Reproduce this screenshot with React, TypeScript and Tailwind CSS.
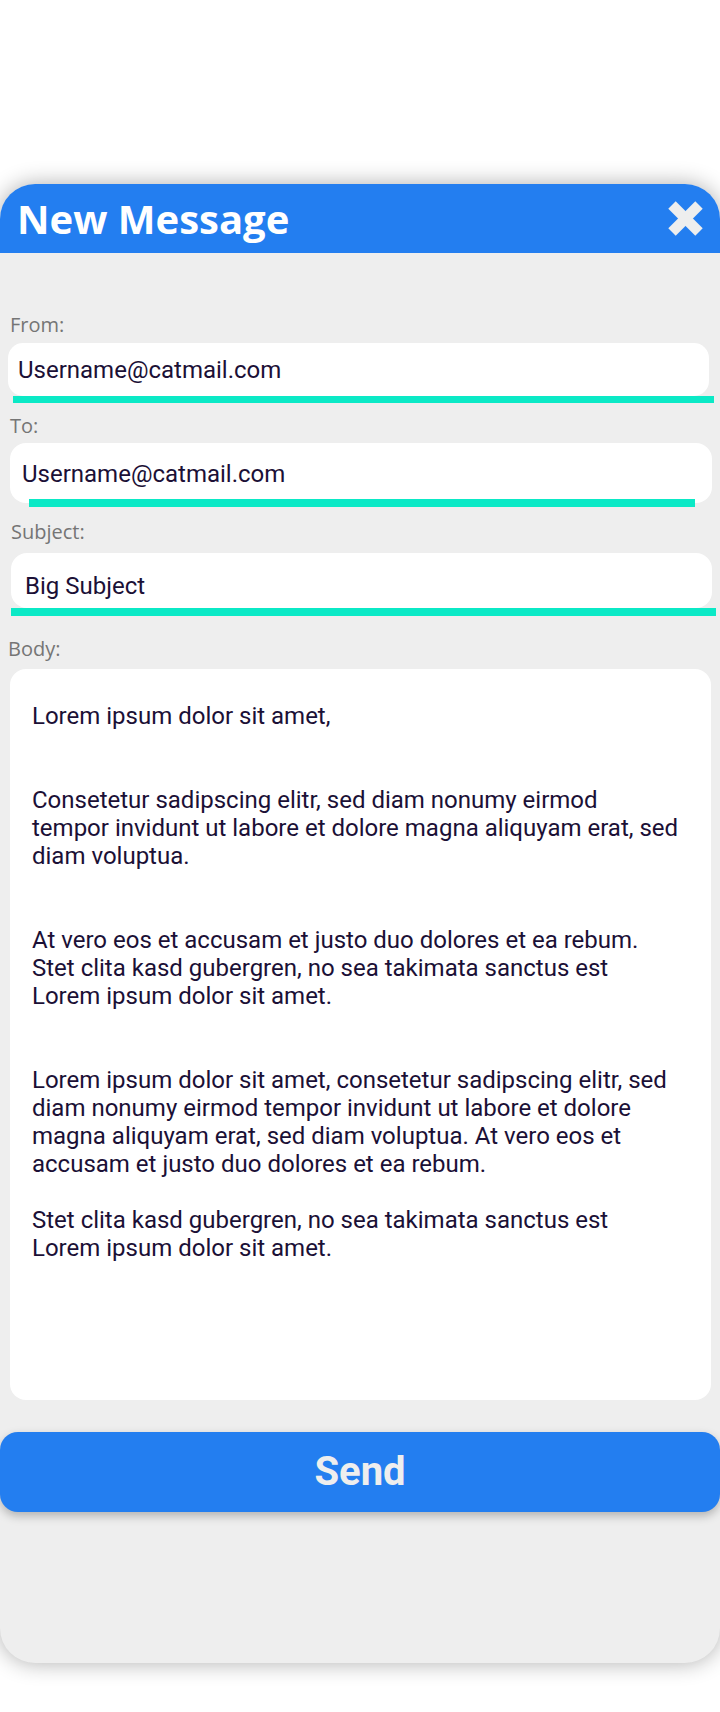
import React from "react";

const roboto = { fontFamily: "Roboto, 'Liberation Sans', sans-serif" };

const Label = ({ text, className }: { text: string; className: string }) => (
  <p className={`text-[20px] leading-[24px] text-[#757575] ${className}`} style={{ fontFamily: "'Open Sans', sans-serif" }}>
    {text}
  </p>
);

const CloseIcon = () => (
  <svg width="37" height="37" viewBox="0 0 37 37" className="shrink-0">
    <line x1="5" y1="5" x2="32" y2="32" stroke="#eeeeee" strokeWidth="10.5" />
    <line x1="32" y1="5" x2="5" y2="32" stroke="#eeeeee" strokeWidth="10.5" />
  </svg>
);

export default function App() {
  return (
    <div className="w-[720px] h-[1712px] bg-white pt-[184px]">
      <div className="w-full bg-[#eeeeee] rounded-[35px] shadow-[0_0_22px_rgba(0,0,0,0.32)] overflow-hidden pb-[151px]">
        <div className="h-[69px] bg-[#237ef0] flex items-center justify-between pl-[17px] pr-[16px]">
          <h1 className="text-[40px] font-bold text-white leading-none" style={{ fontFamily: "'Open Sans', sans-serif" }}>
            New Message
          </h1>
          <CloseIcon />
        </div>

        <div className="pt-[60px] flex flex-col" style={roboto}>
          <Label text="From:" className="pl-[10px]" />
          <div className="mt-[6px] ml-[8px] mr-[11px] h-[53px] bg-white rounded-[15px] flex items-center pl-[10px] text-[24px] text-[#1b1036]">
            Username@catmail.com
          </div>
          <div className="ml-[13px] mr-[6px] h-[7px] bg-[#0be9c6]" />

          <Label text="To:" className="pl-[10px] mt-[11px]" />
          <div className="mt-[5px] ml-[10px] mr-[8px] h-[60px] bg-white rounded-[16px] flex items-center pl-[12px] pt-[2px] text-[24px] text-[#1b1036]">
            Username@catmail.com
          </div>
          <div className="-mt-[4px] ml-[29px] mr-[25px] h-[8px] bg-[#0be9c6]" />

          <Label text="Subject:" className="pl-[11px] mt-[13px]" />
          <div className="mt-[9px] ml-[11px] mr-[8px] h-[55px] bg-white rounded-[16px] flex items-center pl-[14px] pt-[10px] text-[24px] text-[#1b1036]">
            Big Subject
          </div>
          <div className="ml-[11px] mr-[4px] h-[8px] bg-[#0be9c6]" />

          <Label text="Body:" className="pl-[8px] mt-[21px]" />
          <div className="mt-[8px] ml-[10px] mr-[9px] h-[731px] bg-white rounded-[16px] pl-[22px] pr-[12px] pt-[33px] text-[24px] leading-[28px] text-[#1b1036]">
            <p>Lorem ipsum dolor sit amet,</p>
            <p className="mt-[56px]">
              Consetetur sadipscing elitr, sed diam nonumy eirmod
              <br />
              tempor invidunt ut labore et dolore magna aliquyam erat, sed
              <br />
              diam voluptua.
            </p>
            <p className="mt-[56px]">
              At vero eos et accusam et justo duo dolores et ea rebum.
              <br />
              Stet clita kasd gubergren, no sea takimata sanctus est
              <br />
              Lorem ipsum dolor sit amet.
            </p>
            <p className="mt-[56px]">
              Lorem ipsum dolor sit amet, consetetur sadipscing elitr, sed
              <br />
              diam nonumy eirmod tempor invidunt ut labore et dolore
              <br />
              magna aliquyam erat, sed diam voluptua. At vero eos et
              <br />
              accusam et justo duo dolores et ea rebum.
            </p>
            <p className="mt-[28px]">
              Stet clita kasd gubergren, no sea takimata sanctus est
              <br />
              Lorem ipsum dolor sit amet.
            </p>
          </div>

          <button className="mt-[32px] h-[80px] w-full bg-[#237ef0] rounded-[18px] shadow-[0_4px_10px_rgba(0,0,0,0.25)] text-[40px] font-bold text-[#eeeeee]">
            Send
          </button>
        </div>
      </div>
    </div>
  );
}
